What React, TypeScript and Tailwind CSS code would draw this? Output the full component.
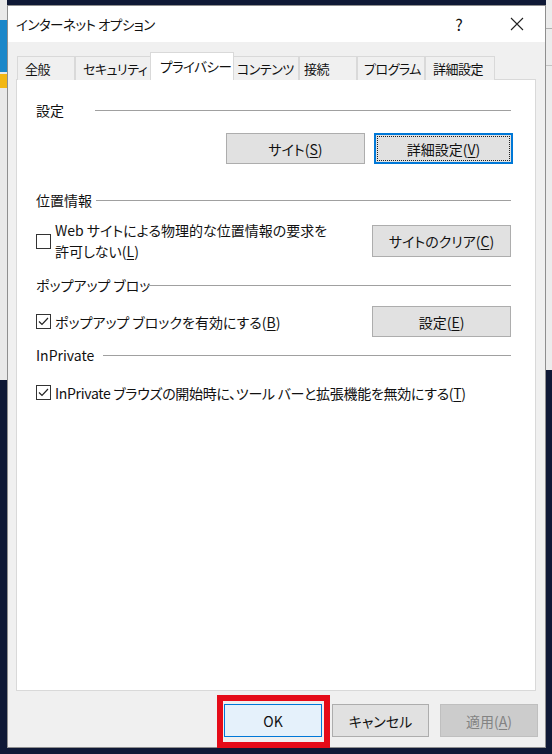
import React from "react";

interface Tab {
  label: string;
  width: number;
  pad: number;
  active?: boolean;
}

const tabs: Tab[] = [
  { label: "全般", width: 58, pad: 7 },
  { label: "セキュリティ", width: 77, pad: 7 },
  { label: "プライバシー", width: 84, pad: 9, active: true },
  { label: "コンテンツ", width: 67, pad: 4 },
  { label: "接続", width: 58, pad: 4 },
  { label: "プログラム", width: 68, pad: 6 },
  { label: "詳細設定", width: 70, pad: 7 },
];

const Heading = ({ label, labelWidth, className }: { label: string; labelWidth: number; className: string }) => (
  <div className={`flex items-center h-[20px] ${className}`}>
    <span className="shrink-0 whitespace-nowrap" style={{ width: labelWidth }}>
      {label}
    </span>
    <div className="flex-1 h-px bg-[#a0a0a0]" />
  </div>
);

const CheckBox = ({ checked }: { checked?: boolean }) => (
  <span className="shrink-0 w-[15px] h-[15px] border border-[#333] bg-white flex items-center justify-center">
    {checked && (
      <svg width="13" height="13" viewBox="0 0 13 13">
        <polyline points="2,6.5 5,9.5 11,3" fill="none" stroke="#222" strokeWidth="1.2" />
      </svg>
    )}
  </span>
);

const Key = ({ k }: { k: string }) => (
  <>
    (<span className="underline underline-offset-2">{k}</span>)
  </>
);

const PanelButton = ({ children, className = "" }: { children: React.ReactNode; className?: string }) => (
  <div
    className={`w-[139px] h-[31px] bg-[#e1e1e1] border border-[#adadad] flex items-center justify-center whitespace-nowrap ${className}`}
  >
    {children}
  </div>
);

export default function App() {
  return (
    <div className="relative w-[552px] h-[754px] overflow-hidden bg-[#0f1936] font-['Noto_Sans_CJK_JP',sans-serif] [font-feature-settings:'palt'] text-[14px] leading-[20px] text-[#111]">
      {/* desktop behind the dialog */}
      <div className="absolute left-0 top-0 w-[7px] h-[380px] bg-[#e9e9e9]" />
      <div className="absolute left-0 top-[20px] w-[7px] h-[52px] bg-[#1b87c9]" />
      <div className="absolute left-0 top-[74px] w-[7px] h-[14px] bg-[#f2b714]" />
      <div className="absolute left-[546px] top-0 w-[6px] h-[370px] bg-[#ececec]" />
      <div className="absolute left-[546px] top-[28px] w-[6px] h-px bg-[#b0b0b0]" />
      <div className="absolute left-[546px] top-[65px] w-[6px] h-px bg-[#c4c4c4]" />

      {/* dialog window */}
      <div className="ml-[7px] mt-[5px] w-[539px] h-[743px] border border-[#8f8f8f] bg-[#f0f0f0] flex flex-col">
        {/* title bar */}
        <div className="h-[36px] bg-white flex items-center pl-[8px]">
          <span className="flex-1 whitespace-nowrap text-[13.5px] tracking-[-0.5px]">インターネット オプション</span>
          <span className="w-[58px] text-center text-[16px]">?</span>
          <span className="w-[57px] flex items-center justify-center">
            <svg width="14" height="14" viewBox="0 0 14 14">
              <path d="M1 1 L13 13 M13 1 L1 13" stroke="#222" strokeWidth="1.1" />
            </svg>
          </span>
        </div>

        {/* tabs */}
        <div className="flex items-end h-[28px] mt-[10px] pl-[9px] relative z-10 text-[13px] tracking-[-0.5px]">
          {tabs.map((t) =>
            t.active ? (
              <div
                key={t.label}
                className="relative h-[28px] -mx-[2px] bg-white border border-b-0 border-[#d9d9d9] flex items-start pt-[3px] whitespace-nowrap text-[13.5px]"
                style={{ width: t.width, paddingLeft: t.pad }}
              >
                {t.label}
              </div>
            ) : (
              <div
                key={t.label}
                className="h-[24px] bg-[#f0f0f0] border border-b-0 border-[#d9d9d9] flex items-center whitespace-nowrap overflow-hidden"
                style={{ width: t.width, paddingLeft: t.pad }}
              >
                {t.label}
              </div>
            )
          )}
        </div>

        {/* privacy panel */}
        <div className="ml-[8px] -mt-px w-[520px] h-[612px] border border-[#d9d9d9] bg-white pl-[19px] pr-[24px] flex flex-col">
          <Heading label="設定" labelWidth={59} className="mt-[20px]" />
          <div className="flex justify-end gap-[9px] mt-[13px] -mr-[2px]">
            <PanelButton>
              サイト<Key k="S" />
            </PanelButton>
            <div className="w-[139px] h-[31px] bg-[#e1e1e1] border-2 border-[#0078d7] p-px">
              <div className="w-full h-full border border-dotted border-[#222] flex items-center justify-center">
                詳細設定<Key k="V" />
              </div>
            </div>
          </div>

          <Heading label="位置情報" labelWidth={60} className="mt-[26px]" />
          <div className="flex items-center mt-[10px]">
            <CheckBox />
            <span className="ml-[4px] flex-1 leading-[21px]">
              Web サイトによる物理的な位置情報の要求を
              <br />
              許可しない<Key k="L" />
            </span>
            <PanelButton className="h-[32px]">
              サイトのクリア<Key k="C" />
            </PanelButton>
          </div>

          <Heading label="ポップアップ ブロッ" labelWidth={111} className="mt-[13px]" />
          <div className="flex items-center mt-[11px]">
            <CheckBox checked />
            <span className="ml-[4px] flex-1">
              ポップアップ ブロックを有効にする<Key k="B" />
            </span>
            <PanelButton>
              設定<Key k="E" />
            </PanelButton>
          </div>

          <Heading label="InPrivate" labelWidth={67} className="mt-[8px]" />
          <div className="flex items-center mt-[17px] h-[21px]">
            <CheckBox checked />
            <span className="ml-[4px] whitespace-nowrap tracking-[-0.3px]">
              InPrivate ブラウズの開始時に、ツール バーと拡張機能を無効にする<Key k="T" />
            </span>
          </div>
        </div>

        {/* dialog buttons */}
        <div className="flex justify-end pr-[7px] mt-[13px]">
          <div className="w-[98px] h-[33px] bg-[#e5f1fb] border border-[#0078d7] flex items-center justify-center">
            OK
          </div>
          <div className="ml-[10px] w-[97px] h-[33px] bg-[#e1e1e1] border border-[#adadad] flex items-center justify-center">
            キャンセル
          </div>
          <div className="ml-[11px] w-[98px] h-[33px] bg-[#cccccc] border border-[#bfbfbf] text-[#838383] flex items-center justify-center">
            適用<Key k="A" />
          </div>
        </div>
      </div>

      {/* highlight frame */}
      <div className="absolute left-[217px] top-[695px] w-[113px] h-[53px] border-[6px] border-[#e50b18]" />
    </div>
  );
}
